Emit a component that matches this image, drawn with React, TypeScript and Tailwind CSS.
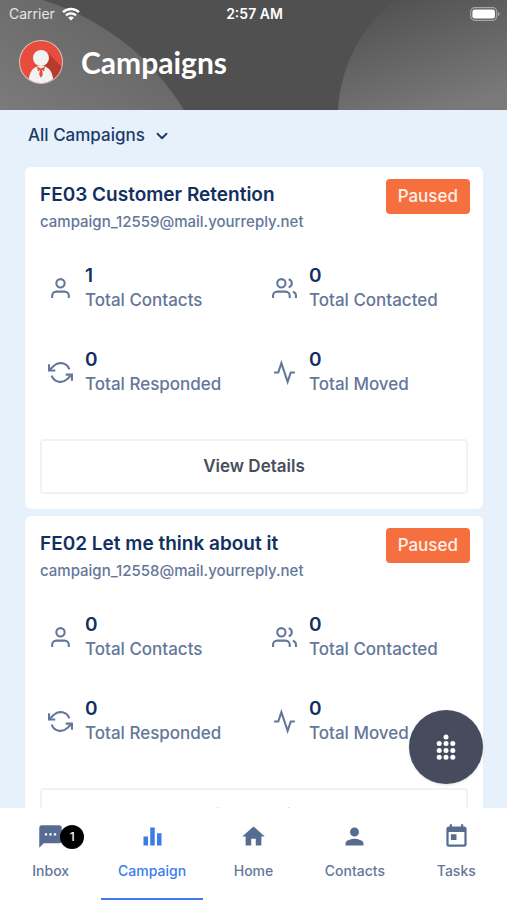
import React, { useState } from "react";
import { FiActivity, FiChevronDown, FiRefreshCcw, FiUser, FiUsers } from "react-icons/fi";
import { MdEqualizer, MdHome, MdPerson, MdTextsms, MdToday } from "react-icons/md";

type Campaign = {
  name: string;
  email: string;
  status: string;
  contacts: number;
  contacted: number;
  responded: number;
  moved: number;
};

const campaigns: Campaign[] = [
  {
    name: "FE03 Customer Retention",
    email: "campaign_12559@mail.yourreply.net",
    status: "Paused",
    contacts: 1,
    contacted: 0,
    responded: 0,
    moved: 0,
  },
  {
    name: "FE02 Let me think about it",
    email: "campaign_12558@mail.yourreply.net",
    status: "Paused",
    contacts: 0,
    contacted: 0,
    responded: 0,
    moved: 0,
  },
];

const tabs = [
  { label: "Inbox", icon: MdTextsms, badge: 1 },
  { label: "Campaign", icon: MdEqualizer },
  { label: "Home", icon: MdHome },
  { label: "Contacts", icon: MdPerson },
  { label: "Tasks", icon: MdToday },
];

const StatusBar: React.FC = () => (
  <div className="grid h-7 grid-cols-3 items-center pr-[7px] pl-[9px] text-sm text-white">
    <div className="flex items-center gap-[7px] text-[#e6e6e6]">
      <span>Carrier</span>
      <svg width="18" height="14" viewBox="0 0 18 14" fill="none" stroke="#fff" strokeWidth="2.4">
        <path d="M1 5.2a11.5 11.5 0 0 1 16 0" />
        <path d="M4 8.4a7.2 7.2 0 0 1 10 0" />
        <path d="M9 13.6 6.2 10.7a4.1 4.1 0 0 1 5.6 0z" fill="#fff" stroke="none" />
      </svg>
    </div>
    <span className="text-center font-semibold">2:57 AM</span>
    <svg className="justify-self-end" width="30" height="14" viewBox="0 0 30 14">
      <rect x="0.7" y="0.7" width="26" height="12.6" rx="4" fill="none" stroke="#a5a5a5" strokeWidth="1.2" />
      <rect x="2.4" y="2.4" width="22.6" height="9.2" rx="2.4" fill="#fff" />
      <path d="M28 5v4c1-.3 1.6-1 1.6-2S29 5.300 28 5z" fill="#a5a5a5" />
    </svg>
  </div>
);

const Avatar: React.FC = () => (
  <svg width="44" height="44" viewBox="0 0 44 44" aria-label="Profile">
    <defs>
      <clipPath id="avatar-clip">
        <circle cx="22" cy="22" r="21" />
      </clipPath>
    </defs>
    <circle cx="22" cy="22" r="22" fill="#dcc3bd" />
    <g clipPath="url(#avatar-clip)">
      <rect width="44" height="44" fill="#e74c3c" />
      <path d="M28 12 46 30v16H30L22 26z" fill="#b93a2e" />
      <circle cx="22" cy="18" r="8" fill="#f2f2f2" />
      <path d="M9 44c1-9 3-15 8-17l2-1h6l2 1c5 2 7 8 8 17z" fill="#f2f2f2" />
      <path d="M18 26.500l4 2 4-2-1 5-2-2 .8 5L22 38l-1.800-3.500.8-5-2 2z" fill="#e74c3c" />
    </g>
  </svg>
);

const Stat: React.FC<{ icon: React.ReactNode; value: number; label: string }> = ({ icon, value, label }) => (
  <div className="flex items-center gap-3 text-[#64779a]">
    {icon}
    <div>
      <p className="text-[19px]/6 font-semibold text-[#12305f]">{value}</p>
      <p className="text-[17px]/6 font-medium whitespace-nowrap">{label}</p>
    </div>
  </div>
);

const iconProps = { size: 25, strokeLinecap: "butt", strokeLinejoin: "miter" } as const;

const CampaignCard: React.FC<{ campaign: Campaign }> = ({ campaign }) => (
  <article className="shrink-0 rounded-md bg-white px-[15px] pt-3 pb-[15px]">
    <div className="flex items-start justify-between">
      <div className="pt-0.5">
        <h2 className="text-[19px]/7 font-semibold text-[#12305f]">{campaign.name}</h2>
        <p className="text-[15px]/[26px] font-medium text-[#64779a]">{campaign.email}</p>
      </div>
      <span className="-mr-0.5 rounded bg-[#f56f3f] px-3 text-[17px]/[35px] font-medium text-[#fff0e8]">
        {campaign.status}
      </span>
    </div>
    <div className="mt-[29px] grid grid-cols-[224px_1fr] gap-y-9 pl-2">
      <Stat icon={<FiUser {...iconProps} />} value={campaign.contacts} label="Total Contacts" />
      <Stat icon={<FiUsers {...iconProps} />} value={campaign.contacted} label="Total Contacted" />
      <Stat icon={<FiRefreshCcw {...iconProps} />} value={campaign.responded} label="Total Responded" />
      <Stat icon={<FiActivity {...iconProps} />} value={campaign.moved} label="Total Moved" />
    </div>
    <button
      type="button"
      className="mt-[43px] h-[55px] w-full rounded border-2 border-[#f1f2f4] text-[17px] font-semibold text-[#4a4e5c]"
    >
      View Details
    </button>
  </article>
);

const CampaignsPage: React.FC = () => {
  const [activeTab, setActiveTab] = useState("Campaign");

  return (
    <div className="flex h-screen flex-col overflow-hidden bg-[#e6f1fb] font-['Inter',sans-serif]">
      <header className="relative h-[110px] shrink-0 overflow-hidden bg-[#505050]">
        <svg className="absolute inset-0 h-full w-full" viewBox="0 0 507 110" preserveAspectRatio="none">
          <defs>
            <linearGradient id="left-glow" x1="0" y1="1" x2="0.9" y2="0.2">
              <stop offset="0" stopColor="#7b7b7b" />
              <stop offset="1" stopColor="#626262" />
            </linearGradient>
            <linearGradient id="right-glow" x1="0.2" y1="0" x2="0.7" y2="1">
              <stop offset="0" stopColor="#505050" />
              <stop offset="1" stopColor="#7a7a7a" />
            </linearGradient>
          </defs>
          <path d="M0 0h43C105 20 152 58 184 110H0z" fill="url(#left-glow)" />
          <path d="M338 110C340 70 360 25 396 0h111v110z" fill="url(#right-glow)" />
        </svg>
        <div className="relative">
          <StatusBar />
          <div className="flex items-center gap-[18px] px-[19px] pt-3">
            <Avatar />
            <h1 className="font-['Lato',sans-serif] text-3xl font-bold text-white">Campaigns</h1>
          </div>
        </div>
      </header>

      <main className="relative flex min-h-0 flex-1 flex-col">
        <button
          type="button"
          className="ml-7 flex h-[57px] shrink-0 items-center gap-2 self-start pb-1.5 text-[17px] font-medium text-[#1d3a6b]"
        >
          All Campaigns
          <FiChevronDown size={18} strokeWidth={2.5} />
        </button>
        <div className="flex min-h-0 flex-1 flex-col gap-[7px] overflow-hidden pr-6 pl-[25px]">
          {campaigns.map((campaign) => (
            <CampaignCard key={campaign.email} campaign={campaign} />
          ))}
        </div>
        <button
          type="button"
          aria-label="Open dialpad"
          className="absolute right-6 bottom-6 flex size-[74px] items-center justify-center rounded-full bg-[#474b5e] shadow-sm"
        >
          <svg width="20" height="26" viewBox="0 0 20 26" fill="#fff">
            <circle cx="10" cy="3" r="2.500" />
            {[9.6, 16.4, 23.2].map((y) =>
              [3.2, 10, 16.8].map((x) => <circle key={`${x}-${y}`} cx={x} cy={y} r="2.500" />)
            )}
          </svg>
        </button>
      </main>

      <nav className="grid h-[92px] shrink-0 grid-cols-5 bg-white">
        {tabs.map(({ label, icon: Icon, badge }) => (
          <button
            key={label}
            type="button"
            onClick={() => setActiveTab(label)}
            className={`flex flex-col items-center gap-[11px] border-b-2 pt-[15px] text-sm font-medium ${
              activeTab === label ? "border-[#3b7bea] text-[#3b7bea]" : "border-transparent text-[#64779a]"
            }`}
          >
            <span className={`relative ${activeTab === label ? "" : "text-[#566d91]"}`}>
              <Icon size={27} />
              {badge && (
                <span className="absolute top-0.5 left-[23px] flex size-6 items-center justify-center rounded-full bg-black text-xs text-white">
                  {badge}
                </span>
              )}
            </span>
            {label}
          </button>
        ))}
      </nav>
    </div>
  );
};

export default function App() {
  return <CampaignsPage />;
}
